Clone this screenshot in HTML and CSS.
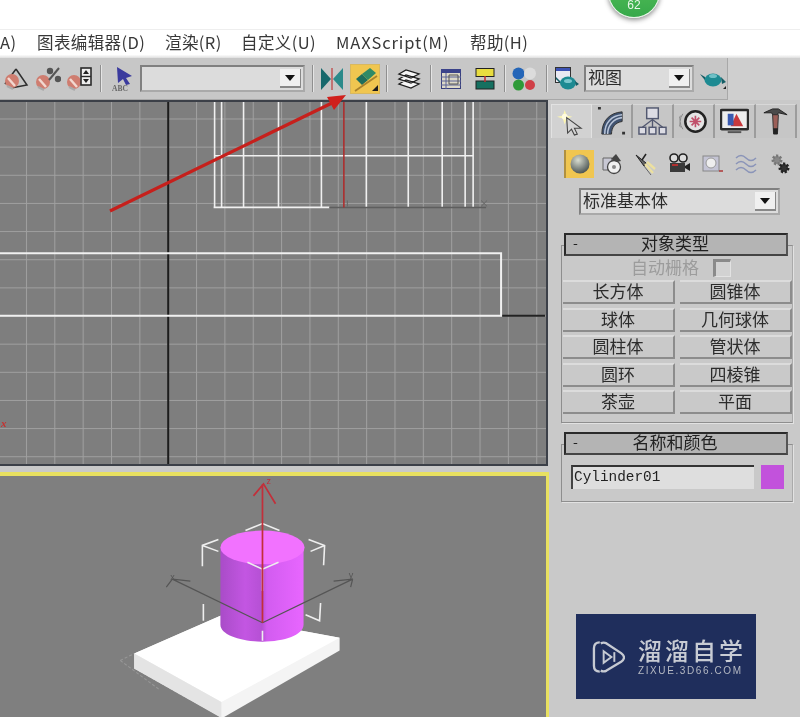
FILE: index.html
```html
<!DOCTYPE html>
<html lang="zh">
<head>
<meta charset="utf-8">
<title>3ds Max</title>
<link rel="stylesheet" href="styles.css">
</head>
<body>
<div class="page">
  <div class="topstrip"></div>
  <div class="badge"><span class="badge-num">62</span></div>

  <nav class="menubar">
    <span>A)</span>
    <span>图表编辑器(D)</span>
    <span>渲染(R)</span>
    <span>自定义(U)</span>
    <span class="m-max">MAXScript(M)</span>
    <span>帮助(H)</span>
  </nav>

  <div class="toolrow">
    <div class="toolbar">
      <svg class="i i-angle" viewBox="0 0 26 24"><path d="M13 2L2 17M13 2l11 16L8 21M7 10l5 9" stroke="#2e2e2e" stroke-width="1.5" fill="none"/><circle cx="9" cy="14" r="7" fill="#cf7d70"/><path d="M5 11l7 8" stroke="#f2d8d0" stroke-width="2.4"/><path d="M4 19l6 3" stroke="#aaa" stroke-width="2"/></svg>
      <svg class="i i-pct" viewBox="0 0 26 24"><circle cx="8" cy="15" r="7" fill="#cf7d70"/><path d="M4 12l7 8" stroke="#f2d8d0" stroke-width="2.4"/><path d="M3 20l6 3" stroke="#aaa" stroke-width="2"/><circle cx="15" cy="4" r="3.2" fill="#555"/><circle cx="23" cy="12" r="3.2" fill="#555"/><path d="M14 13l10-12" stroke="#555" stroke-width="2"/></svg>
      <svg class="i i-spin" viewBox="0 0 26 24"><circle cx="7" cy="15" r="7" fill="#cf7d70"/><path d="M3 12l7 8" stroke="#f2d8d0" stroke-width="2.4"/><path d="M2 20l6 3" stroke="#aaa" stroke-width="2"/><rect x="14" y="1" width="10" height="17" fill="#eee" stroke="#2a2a2a" stroke-width="1.6"/><path d="M16 7l3-4 3 4zM16 12l3 4 3-4z" fill="#222"/><path d="M14 9.5h10" stroke="#2a2a2a" stroke-width="1.4"/></svg>
      <i class="sep s-1"></i>
      <svg class="i i-abc" viewBox="0 0 22 26"><path d="M5 1l15 9-6 2 4 6-4 1-3-6-5 4z" fill="#3a3a9e"/><text x="0" y="25" class="abc">ABC</text></svg>
      <div class="combo c-sel"><span class="combo-val"></span><span class="combo-btn"><i class="tri"></i></span></div>
      <i class="sep s-2"></i>
      <svg class="i i-mirror" viewBox="0 0 22 22"><path d="M0 0l10 11L0 22z" fill="#17686c"/><path d="M22 0L12 11l10 11z" fill="#2b8a8a"/><path d="M11 0v22" stroke="#c05050" stroke-width="1.4"/></svg>
      <div class="active-tool"><svg class="i-active" viewBox="0 0 28 28"><path d="M5 14l6-5 6 6-6 5z" fill="#1f6e5c"/><path d="M11 9l8-6 6 5-8 7z" fill="#2f8a66"/><path d="M4 26L26 11" stroke="#a9822c" stroke-width="1.8"/><path d="M21 26l6-6v6z" fill="#1c1c1c"/></svg></div>
      <i class="sep s-3"></i>
      <svg class="i i-layers" viewBox="0 0 24 20"><path d="M2 5l7-4 13 4-8 4zM2 10l7-4 13 4-8 4zM2 15l7-4 13 4-8 4z" fill="#f6f6f6" stroke="#1e1e1e" stroke-width="1.3"/></svg>
      <i class="sep s-4"></i>
      <svg class="i i-curve" viewBox="0 0 20 20"><rect x="0.5" y="0.5" width="19" height="19" fill="#dcd8c8" stroke="#383f7c"/><rect x="0" y="0" width="20" height="4" fill="#3b438a"/><path d="M5 4v16M0 8h20M0 12h20M0 16h20" stroke="#5a6296"/><path d="M8 6h9v9H8z" fill="none" stroke="#555"/></svg>
      <svg class="i i-schem" viewBox="0 0 20 22"><rect x="1" y="0.5" width="18" height="8" fill="#e8dc40" stroke="#222"/><rect x="1" y="13" width="18" height="8" fill="#157060" stroke="#222"/><path d="M10 8v6" stroke="#c03030" stroke-width="1.6"/></svg>
      <i class="sep s-5"></i>
      <svg class="i i-mat" viewBox="0 0 24 24"><circle cx="6.5" cy="6.5" r="6" fill="#2566b8"/><circle cx="18" cy="6.5" r="6" fill="#dcdcdc"/><circle cx="6.5" cy="18" r="5.5" fill="#2f9a38"/><circle cx="18" cy="18" r="5" fill="#d04048"/></svg>
      <i class="sep s-6"></i>
      <svg class="i i-render" viewBox="0 0 24 24"><rect x="0.5" y="0.5" width="15" height="15" fill="#e9e9f2" stroke="#333"/><rect x="1" y="1" width="14" height="3" fill="#3c52b4"/><ellipse cx="13" cy="16" rx="8" ry="6.5" fill="#1d8a92"/><path d="M5 16c-3-3-5-4-4-6l4 4zM20 14l4 3-3 2z" fill="#155e66"/><ellipse cx="13" cy="14" rx="4" ry="2" fill="#79c6cc"/></svg>
      <div class="combo c-view"><span class="combo-val">视图</span><span class="combo-btn"><i class="tri"></i></span></div>
      <div class="teapot-wrap"><svg class="i i-teapot" viewBox="0 0 26 22"><ellipse cx="13" cy="12" rx="8.5" ry="6.5" fill="#1d8a92"/><path d="M5 12C2 9 1 7 0 6l5 3zM21 9l5 5-4 2z" fill="#155e66"/><ellipse cx="13" cy="8" rx="4" ry="2" fill="#6fc0c6"/><path d="M23 21l3-3v3z" fill="#222"/></svg></div>
    </div>
  </div>

  <main class="workspace">
    <section class="viewports">
      <svg class="vp vp-top" viewBox="0 100 547 364" preserveAspectRatio="none">
        <defs>
          <pattern id="grid" x="-2.4" y="116.6" width="28.4" height="28.3" patternUnits="userSpaceOnUse">
            <path d="M0.5 0V28.3M0 0.5H28.4" stroke="#a0a0a0" stroke-width="1"/>
          </pattern>
        </defs>
        <rect x="0" y="100" width="547" height="364" fill="#7e7e7e"/>
        <rect x="0" y="100" width="547" height="364" fill="url(#grid)"/>
        <path d="M168.5 100V464" stroke="#1c1c1c" stroke-width="2"/>
        <path d="M503 315H546" stroke="#222" stroke-width="2"/>
        <path d="M-3 252H502V315H-3" fill="none" stroke="#f0f0f0" stroke-width="2"/>
        <path d="M215 100V206M222 100V206M244 100V206M279 100V206M322 100V206M367 100V206M409 100V206M443 100V206M466 100V206M474 100V206M215 154H474M214 206H330" stroke="#f0f0f0" stroke-width="1.6" fill="none"/>
        <path d="M330 206H487" stroke="#5e5e5e" stroke-width="1.5"/>
        <path d="M344.5 100V206" stroke="#b02a2a" stroke-width="1.5"/>
        <path d="M348 199V205M482 199l6 6M488 199l-6 6" stroke="#666" stroke-width="1"/>
        <text x="1" y="427" class="axis-x">x</text>
      </svg>
      <svg class="vp vp-bottom" viewBox="0 474 545 243" preserveAspectRatio="none">
        <defs>
          <linearGradient id="cyl" x1="0" x2="1" y1="0" y2="0">
            <stop offset="0" stop-color="#a94cc8"/>
            <stop offset=".3" stop-color="#c356e2"/>
            <stop offset=".5" stop-color="#b550d4"/>
            <stop offset=".56" stop-color="#d25cf0"/>
            <stop offset="1" stop-color="#e866ff"/>
          </linearGradient>
        </defs>
        <rect x="0" y="474" width="545" height="243" fill="#7f7f7f"/>
        <path d="M120 660L134 653M120 660L160 690M134 668L190 700" stroke="#989898" stroke-width="1" stroke-dasharray="3 2" fill="none"/>
        <path d="M134 653L220 615L339 637V650L222 718L134 668z" fill="#f4f4f4"/>
        <path d="M134 653L221 702L339 637L220 615z" fill="#fff"/>
        <path d="M134 653L221 702V718L134 668z" fill="#e4e4e4"/>
        <path d="M220 546V624C220 634 240 641 262 641S303 634 303 624V546z" fill="url(#cyl)"/>
        <ellipse cx="262" cy="546" rx="42" ry="17" fill="#f272ff"/>
        <path d="M262 622L172 578M262 622L352 578M172 578L166 586M172 578L190 580M352 578L333 580M352 578L350 586" stroke="#555" stroke-width="1.2" fill="none"/>
        <text x="170" y="579" class="axis-g">x</text>
        <text x="348" y="577" class="axis-g">y</text>
        <path d="M245 529L262 522L279 529M218 538L202 544V565M202 544L218 550M308 538L324 544L323 564M324 544L310 550M247 561L262 568L278 561M262 568V590M203 603V620M320 602L319 620L305 614M262 630V640" stroke="#eee" stroke-width="1.6" fill="none"/>
        <path d="M262 622V482M253 494L263 482L275 502" stroke="#c22f3a" stroke-width="1.7" fill="none"/>
        <text x="266" y="482" class="axis-z">z</text>
      </svg>
    </section>

    <aside class="panel">
      <div class="tabs">
        <div class="tab tab-on"><svg viewBox="0 0 30 30"><path d="M8 3l2 6 6 1-6 2-2 6-2-6-6-2 6-1z" fill="#fdf6b0"/><circle cx="8" cy="10" r="3" fill="#fffbe0"/><path d="M10 11l15 11-7 0 3 6-3 1-3-6-4 4z" fill="#d6d6d6" stroke="#444" stroke-width="1.1"/></svg></div>
        <div class="tab"><svg viewBox="0 0 30 30"><path d="M5 28C5 14 13 6 26 5v10C19 16 15 21 15 28z" fill="#3f5270" stroke="#333"/><path d="M8 28C8 16 15 9 26 8M11 28C11 19 17 12 26 11" stroke="#b8c4d8" stroke-width="1.6" fill="none"/><path d="M1 1h3M26 27h3" stroke="#333" stroke-width="3"/></svg></div>
        <div class="tab"><svg viewBox="0 0 30 30"><rect x="9" y="1" width="12" height="11" fill="#dcdce4" stroke="#525870" stroke-width="1.5"/><rect x="1" y="21" width="7" height="7" fill="#dcdce4" stroke="#525870" stroke-width="1.5"/><rect x="11.5" y="21" width="7" height="7" fill="#dcdce4" stroke="#525870" stroke-width="1.5"/><rect x="22" y="21" width="7" height="7" fill="#dcdce4" stroke="#525870" stroke-width="1.5"/><path d="M15 12v9M4.5 21L15 13l10.500 8" stroke="#525870" stroke-width="1.4" fill="none"/></svg></div>
        <div class="tab"><svg viewBox="0 0 30 30"><circle cx="17" cy="15" r="10.500" fill="#e4e4e4" stroke="#222" stroke-width="2.600"/><path d="M17 9v12M11 15h12M13 11l8 8M21 11l-8 8" stroke="#c0506a" stroke-width="1.700"/><path d="M4 7a13 13 0 0 0 0 16M1.500 9a12 12 0 0 0 0 12" stroke="#888" fill="none"/></svg></div>
        <div class="tab"><svg viewBox="0 0 30 30"><rect x="1" y="3" width="28" height="20" rx="1" fill="#eee" stroke="#2a2a2a" stroke-width="2.600"/><path d="M11 20L17 7l7 13z" fill="#c8383c"/><rect x="8" y="7" width="6" height="12" fill="#3a5ab0"/><path d="M8 25h14v2H8z" fill="#555"/></svg></div>
        <div class="tab"><svg viewBox="0 0 30 30"><path d="M3 6l9-4h6l9 6-9-2-1 2h-5l-1-2z" fill="#4a4a4a" stroke="#222"/><path d="M12 8h6l-1 20h-4z" fill="#9c5f58" stroke="#333"/><path d="M12.500 22h5l-.500 6h-4z" fill="#222"/></svg></div>
      </div>

      <div class="subtabs">
        <div class="sub sub-on"><svg viewBox="0 0 22 22"><defs><radialGradient id="sph" cx=".4" cy=".3" r=".8"><stop offset="0" stop-color="#d8dcd0"/><stop offset="1" stop-color="#3a4444"/></radialGradient></defs><circle cx="11" cy="11" r="9.500" fill="url(#sph)"/></svg></div>
        <div class="sub"><svg viewBox="0 0 22 22"><path d="M2 5h9v12H2z" fill="#c8c8d4" stroke="#666"/><circle cx="13" cy="14" r="6.500" fill="#f0f0f0" stroke="#444" stroke-width="1.300"/><circle cx="13" cy="14" r="2" fill="#888"/><path d="M10 6l5-5 5 7-4 1z" fill="#444"/></svg></div>
        <div class="sub"><svg viewBox="0 0 22 22"><path d="M1 2l10 8-2 3z" fill="#666" stroke="#222"/><path d="M11 1L7 7" stroke="#222" stroke-width="1.500"/><path d="M10 11l8 9M12 9l8 7" stroke="#ece0a0" stroke-width="2.400"/><path d="M9 13l7 9" stroke="#666"/></svg></div>
        <div class="sub"><svg viewBox="0 0 22 22"><circle cx="6" cy="5" r="4" fill="#ddd" stroke="#222" stroke-width="1.600"/><circle cx="15" cy="5" r="4" fill="#ddd" stroke="#222" stroke-width="1.600"/><rect x="2" y="10" width="15" height="9" fill="#3a3a3a"/><path d="M4 12h6" stroke="#b03030" stroke-width="2"/><path d="M17 13l5-3v8l-5-3z" fill="#222"/></svg></div>
        <div class="sub"><svg viewBox="0 0 22 22"><rect x="1" y="3" width="16" height="15" fill="#c4c4d4" stroke="#888"/><circle cx="9" cy="10" r="5" fill="#eee" stroke="#999"/><path d="M17 18h4" stroke="#b04040" stroke-width="1.600"/></svg></div>
        <div class="sub"><svg viewBox="0 0 22 22"><path d="M1 5q5-5 10 0t10 0M1 11q5-5 10 0t10 0M1 17q5-5 10 0t10 0" fill="none" stroke="#8a94b8" stroke-width="1.500"/></svg></div>
        <div class="sub"><svg viewBox="0 0 22 22"><circle cx="8" cy="7" r="4" fill="#888" stroke="#777" stroke-width="3" stroke-dasharray="2 1.500"/><circle cx="15" cy="15" r="4" fill="#333" stroke="#222" stroke-width="3" stroke-dasharray="2 1.500"/></svg></div>
      </div>

      <div class="combo c-prim"><span class="combo-val">标准基本体</span><span class="combo-btn"><i class="tri"></i></span></div>

      <section class="rollout r-type">
        <header class="roll-head"><span class="roll-minus">-</span><span class="roll-title">对象类型</span></header>
        <div class="roll-body body-type">
          <div class="autogrid"><span>自动栅格</span><i class="check"></i></div>
          <div class="btn-grid">
            <button class="btn">长方体</button><button class="btn">圆锥体</button>
            <button class="btn">球体</button><button class="btn">几何球体</button>
            <button class="btn">圆柱体</button><button class="btn">管状体</button>
            <button class="btn">圆环</button><button class="btn">四棱锥</button>
            <button class="btn">茶壶</button><button class="btn">平面</button>
          </div>
        </div>
      </section>

      <section class="rollout r-name">
        <header class="roll-head"><span class="roll-minus">-</span><span class="roll-title">名称和颜色</span></header>
        <div class="roll-body body-name">
          <div class="name-input">Cylinder01</div>
          <i class="swatch"></i>
        </div>
      </section>
    </aside>
  </main>

  <svg class="callout" viewBox="0 0 800 717">
    <path d="M110 211L334 102" stroke="#c6201c" stroke-width="3.200"/>
    <path d="M346 95L327 97L334 110z" fill="#d0201c"/>
  </svg>

  <div class="watermark">
    <svg class="wm-logo" viewBox="0 0 34 34"><path d="M8 2C4 2 2 4 2 8v18c0 4 2 6 6 6" fill="none" stroke="#c6cad2" stroke-width="2.400"/><path d="M9 3c2-1 4-1 6 0l15 10c4 3 4 6 0 9L15 31c-2 1-4 1-6 0" fill="none" stroke="#c6cad2" stroke-width="2.400"/><path d="M12 11l8 6-8 6z" fill="none" stroke="#c6cad2" stroke-width="2"/><path d="M23 12v10" stroke="#c6cad2" stroke-width="2"/></svg>
    <div class="wm-text">
      <div class="wm-cn">溜溜自学</div>
      <div class="wm-en">ZIXUE.3D66.COM</div>
    </div>
  </div>
</div>
</body>
</html>
```

FILE: styles.css
```css
* { box-sizing: border-box; }
html, body { margin: 0; padding: 0; background: #fff; }
body { overflow: hidden; }

.page {
  position: relative;
  width: 800px;
  height: 717px;
  overflow: hidden;
  display: flex;
  flex-direction: column;
  font-family: "Noto Sans CJK SC", "Noto Sans", sans-serif;
  color: #2c2c2c;
  background: #c9c9c9;
  filter: blur(0.4px);
}

.topstrip { height: 30px; flex: none; background: #fff; border-bottom: 1px solid #eee; }

.badge {
  position: absolute;
  left: 608px;
  top: -34px;
  width: 52px;
  height: 52px;
  border-radius: 50%;
  background: linear-gradient(#5cc45c, #37a94a);
  border: 1px solid #e6f4e6;
  box-shadow: 0 2px 5px rgba(0, 0, 0, .45);
  display: flex;
  align-items: flex-end;
  justify-content: center;
}
.badge-num {
  font-family: "Liberation Sans", sans-serif;
  font-size: 12px;
  line-height: 14px;
  padding-bottom: 5px;
  color: #e8f6e8;
}

.menubar {
  height: 28px;
  flex: none;
  background: linear-gradient(#fff 88%, #dedede);
  display: grid;
  grid-template-columns: 37px 128px 76px 95px 134px auto;
  align-items: center;
  font-size: 16.5px;
  letter-spacing: .4px;
  color: #383838;
  white-space: nowrap;
  padding-bottom: 5px;
}
.m-max { letter-spacing: .9px; }

.toolrow { height: 42px; flex: none; background: #cfcfcf; }
.toolbar {
  width: 728px;
  height: 42px;
  background: #c7c7c7;
  border-right: 1px solid #a8a8a8;
  border-bottom: 1px solid #a8a8a8;
  display: flex;
  align-items: center;
}
.i { flex: none; display: block; }
.sep { flex: none; display: block; width: 2px; height: 27px; background: #8f8f8f; border-right: 1px solid #e4e4e4; }

.i-angle { width: 26px; height: 24px; margin-left: 3px; }
.i-pct { width: 26px; height: 24px; margin-left: 6px; }
.i-spin { width: 26px; height: 24px; margin-left: 6px; }
.s-1 { margin-left: 7px; }
.i-abc { width: 22px; height: 26px; margin-left: 10px; }
.c-sel { width: 165px; height: 27px; margin-left: 6px; }
.s-2 { margin-left: 7px; }
.i-mirror { width: 22px; height: 22px; margin-left: 7px; }
.active-tool { flex: none; width: 30px; height: 30px; margin-left: 7px; background: #f0c650; border: 1px solid #d8b860; }
.i-active { display: block; width: 28px; height: 28px; }
.s-3 { margin-left: 6px; }
.i-layers { width: 24px; height: 20px; margin-left: 9px; }
.s-4 { margin-left: 9px; }
.i-curve { width: 20px; height: 20px; margin-left: 9px; }
.i-schem { width: 20px; height: 22px; margin-left: 14px; }
.s-5 { margin-left: 9px; }
.i-mat { width: 24px; height: 24px; margin-left: 6px; }
.s-6 { margin-left: 10px; }
.i-render { width: 24px; height: 24px; margin-left: 7px; }
.c-view { width: 110px; height: 27px; margin-left: 5px; }
.teapot-wrap { flex: none; margin-left: 6px; }
.i-teapot { width: 26px; height: 22px; }

.abc { font: bold 7.5px "Liberation Serif", serif; fill: #666; }

.combo {
  flex: none;
  display: flex;
  align-items: center;
  justify-content: space-between;
  background: #dcdcdc;
  border: 2px solid #808080;
  border-right-color: #a9a9a9;
  border-bottom-color: #a9a9a9;
  padding: 0 2px 0 2px;
  font-size: 17px;
  color: #2c2c2c;
}
.combo-val { white-space: nowrap; line-height: 20px; padding-bottom: 3px; }
.combo-btn {
  flex: none;
  width: 21px;
  height: 19px;
  background: #f0f0f0;
  border-right: 1px solid #888;
  border-bottom: 2px solid #888;
  display: flex;
  align-items: center;
  justify-content: center;
}
.tri { display: block; width: 0; height: 0; border: 5px solid transparent; border-top: 6px solid #111; border-bottom: 0; }

.workspace { flex: 1; min-height: 0; display: flex; }
.viewports { flex: none; width: 549px; display: flex; flex-direction: column; gap: 6px; }
.vp { display: block; flex: none; }
.vp-top {
  width: 548px;
  height: 366px;
  border-right: 2px solid #3c4048;
  border-top: 2px solid #3c4048;
  border-bottom: 2px solid #3c4048;
}
.vp-bottom {
  width: 549px;
  height: 245px;
  border-top: 4px solid #e8e060;
  border-right: 3px solid #e8e060;
}
.axis-x { font: italic bold 11px "Liberation Serif", serif; fill: #c83030; }
.axis-g { font: 9px "Liberation Sans", sans-serif; fill: #555; }
.axis-z { font: 9px "Liberation Sans", sans-serif; fill: #c22f3a; }

.callout { position: absolute; left: 0; top: 0; width: 800px; height: 717px; display: block; pointer-events: none; }

.panel {
  flex: 1;
  min-width: 0;
  display: flex;
  flex-direction: column;
  align-items: flex-start;
  background: #c9c9c9;
  padding-top: 4px;
}

.tabs { display: flex; height: 34px; flex: none; padding-left: 2px; }
.tab {
  flex: none;
  width: 41px;
  height: 34px;
  display: flex;
  align-items: center;
  justify-content: center;
  border-right: 2px solid #9c9c9c;
  border-top: 1px solid #d8d8d8;
  background: #c6c6c6;
}
.tab-on { background: #d2d2d2; border: 1px solid #e2e2e2; border-bottom: 0; }
.tab svg { width: 29px; height: 29px; display: block; }

.subtabs { display: flex; flex: none; height: 28px; margin-top: 12px; margin-left: 15px; gap: 4px; align-items: center; }
.sub { flex: none; width: 29.5px; height: 28px; display: flex; align-items: center; justify-content: center; }
.sub-on { background: #f0c650; border-left: 2px solid #b09040; }
.sub svg { width: 22px; height: 22px; display: block; }

.c-prim { width: 201px; height: 27px; margin-top: 10px; margin-left: 30px; }

.rollout { flex: none; width: 100%; }
.r-type { margin-top: 18px; }
.r-name { margin-top: 9px; }
.roll-head {
  position: relative;
  z-index: 1;
  width: 224px;
  height: 23px;
  margin-left: 15px;
  background: #b4b4b4;
  border: 2px solid #2a2a2a;
  border-right-color: #555;
  border-bottom-color: #444;
  display: flex;
  align-items: center;
  justify-content: center;
  font-size: 17px;
  line-height: 19px;
  color: #222;
}
.roll-title { position: relative; top: -2px; left: -1px; }
.roll-minus { position: absolute; left: 7px; top: -2px; font-size: 14px; }
.roll-body {
  width: 232px;
  margin-left: 12px;
  margin-top: -11px;
  border: 1px solid #8e8e8e;
  border-right-color: #aaa;
  box-shadow: 1px 1px 0 #e2e2e2;
}
.body-type { height: 178px; padding: 10px 0 0 1px; }
.autogrid {
  height: 24px;
  display: flex;
  align-items: center;
  gap: 14px;
  padding-left: 68px;
  font-size: 17px;
  color: #9c9c9c;
}
.autogrid span { position: relative; top: -2px; }
.check {
  display: block;
  flex: none;
  width: 18px;
  height: 18px;
  background: #d2d2d2;
  border-top: 3px solid #8a8a8a;
  border-left: 3px solid #8a8a8a;
  border-right: 1px solid #e2e2e2;
  border-bottom: 1px solid #e2e2e2;
}
.btn-grid {
  display: grid;
  grid-template-columns: 112px 112px;
  column-gap: 5px;
  grid-auto-rows: 24px;
  row-gap: 3.5px;
  margin-top: 0;
}
.btn {
  padding: 0 0 3px;
  margin: 0;
  font-family: inherit;
  font-size: 17px;
  line-height: 18px;
  color: #2c2c2c;
  background: #c9c9c9;
  border: 0;
  border-top: 2px solid #dcdcdc;
  border-right: 2px solid #8c8c8c;
  border-bottom: 2px solid #8c8c8c;
  white-space: nowrap;
  overflow: visible;
}
.body-name { height: 58px; padding: 20px 0 0 9px; display: flex; gap: 7px; align-items: flex-start; }
.name-input {
  flex: none;
  width: 183px;
  height: 24px;
  background: #dedede;
  border-top: 2px solid #333;
  border-left: 2px solid #444;
  padding-left: 1px;
  font-family: "Liberation Mono", monospace;
  font-size: 14.4px;
  line-height: 20px;
  color: #222;
}
.swatch { display: block; flex: none; width: 23px; height: 24px; background: #c252dc; }

.watermark {
  position: absolute;
  left: 576px;
  top: 614px;
  width: 180px;
  height: 85px;
  background: #1f2e5c;
  display: flex;
  align-items: center;
  padding-left: 16px;
  gap: 13px;
  color: #c8ccd4;
}
.wm-logo { display: block; flex: none; width: 33px; height: 34px; }
.wm-text { flex: none; }
.wm-cn { font-size: 24px; line-height: 26px; letter-spacing: 3px; white-space: nowrap; font-weight: 500; }
.wm-en { font-family: "Liberation Sans", sans-serif; font-size: 10px; line-height: 11px; letter-spacing: 1.6px; white-space: nowrap; margin-top: 2px; color: #b4b8c2; }
```
